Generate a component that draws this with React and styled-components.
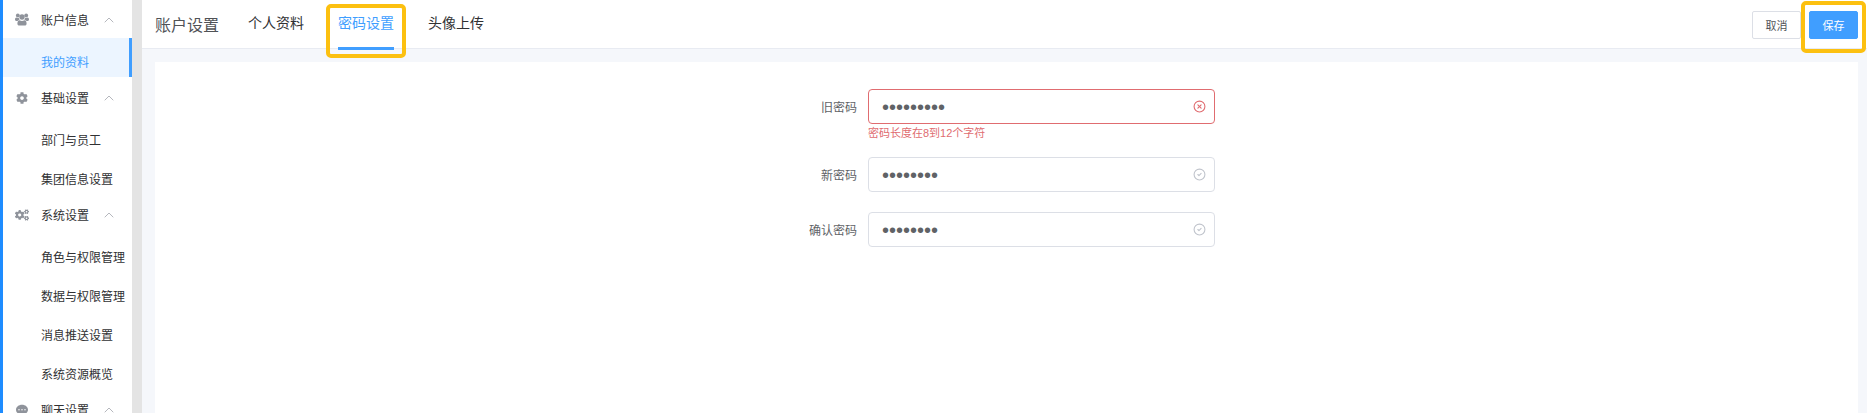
import { useState } from "react";
import styled, { createGlobalStyle } from "styled-components";
import { ChevronUp, CircleCheck, CircleX } from "lucide-react";
import { FaCog, FaCogs, FaCommentDots } from "react-icons/fa";

const GlobalStyle = createGlobalStyle`
  * {
    box-sizing: border-box;
  }

  body {
    margin: 0;
    overflow: hidden;
    color: #303133;
    font-family: "Liberation Sans", "Noto Sans CJK SC", sans-serif;
    font-size: 12px;
  }

  button,
  input {
    font-family: inherit;
  }
`;

const Layout = styled.div`
  display: flex;
  height: 100vh;
  overflow: hidden;
  background-color: #f5f7fb;
`;

const Sidebar = styled.nav`
  flex: none;
  width: 142px;
  overflow: hidden;
  background-color: #fff;
  border-left: 3px solid #1e8cff;
  border-right: 10px solid #e4e4e4;
`;

const GroupHeader = styled.button`
  display: grid;
  grid-template-columns: 16px 1fr 12px;
  column-gap: 11px;
  align-items: center;
  width: 100%;
  height: 38px;
  padding: 1px 17px 0 11px;
  border: none;
  background: none;
  color: #303133;
  font-size: 12px;
  text-align: left;
  cursor: pointer;

  svg {
    justify-self: center;
    color: #8f939b;
  }
`;

const GroupItems = styled.div`
  padding-bottom: 1px;
`;

const MenuLink = styled.a`
  display: flex;
  align-items: center;
  height: 39px;
  padding: 8px 0 0 38px;
  border-right: 3px solid ${(props) => (props.$active ? "#409eff" : "transparent")};
  background-color: ${(props) => (props.$active ? "#ecf5ff" : "transparent")};
  color: ${(props) => (props.$active ? "#409eff" : "#303133")};
  text-decoration: none;
  white-space: nowrap;
`;

const Main = styled.main`
  flex: 1;
  min-width: 0;
  display: flex;
  flex-direction: column;
`;

const Header = styled.header`
  display: flex;
  align-items: center;
  height: 49px;
  padding: 0 9px 0 13px;
  background-color: #fff;
  border-bottom: 1px solid #e8ebf2;
`;

const Title = styled.h1`
  margin: 0 29px 0 0;
  color: #505256;
  font-size: 16px;
  font-weight: 400;
`;

const Tabs = styled.div`
  display: flex;
  gap: 34px;
  flex: 1;
`;

const Highlight = styled.span`
  position: absolute;
  inset: ${(props) => props.$inset};
  border: 4px solid #fcc010;
  border-radius: 5px;
  pointer-events: none;
`;

const Tab = styled.button`
  position: relative;
  height: 50px;
  margin-bottom: -1px;
  padding: 0 0 2px;
  border: none;
  border-bottom: 3px solid ${(props) => (props.$active ? "#409eff" : "transparent")};
  background: none;
  color: ${(props) => (props.$active ? "#409eff" : "#303133")};
  font-size: 14px;
  white-space: nowrap;
  cursor: pointer;
`;

const Actions = styled.div`
  display: flex;
  gap: 8px;
  padding-top: 2px;
`;

const Button = styled.button`
  position: relative;
  width: 49px;
  height: 28px;
  padding: 0;
  border: 1px solid ${(props) => (props.$primary ? "#409eff" : "#dcdfe6")};
  border-radius: 2px;
  background-color: ${(props) => (props.$primary ? "#409eff" : "#fff")};
  color: ${(props) => (props.$primary ? "#fff" : "#505256")};
  font-size: 11px;
  cursor: pointer;
`;

const Card = styled.section`
  flex: 1;
  margin: 13px 9px 0 13px;
  padding: 27px 20px;
  background-color: #fff;
`;

const Form = styled.form`
  display: flex;
  flex-direction: column;
  gap: 20px;
  width: 100%;
  max-width: 417px;
  margin: 0 auto;
`;

const Field = styled.div`
  display: grid;
  grid-template-columns: 59px 1fr;
  column-gap: 11px;
  align-items: center;
`;

const Label = styled.label`
  color: #606266;
  text-align: right;
`;

const InputBox = styled.div`
  display: flex;
  align-items: center;
  height: 35px;
  padding: 0 8px 0 13px;
  border: 1px solid ${(props) => (props.$error ? "#e06c70" : "#dcdfe6")};
  border-radius: 4px;
  color: ${(props) => (props.$error ? "#e06c70" : "#c0c4cc")};
`;

const Input = styled.input`
  flex: 1;
  min-width: 0;
  height: 100%;
  padding: 2px 0 0;
  border: none;
  outline: none;
  background: none;
  color: #606266;
  font-size: 20px;
`;

const ErrorText = styled.p`
  grid-column: 2;
  margin: 5px 0 -1px;
  color: #e06c70;
  font-size: 11px;
  line-height: 9px;
`;

const GroupIcon = () => (
  <svg width="14" height="13" viewBox="0 0 14 13" fill="currentColor">
    <circle cx="2.8" cy="2.4" r="1.9" />
    <circle cx="11.2" cy="2.4" r="1.9" />
    <circle cx="7" cy="4" r="2.7" />
    <path d="M0 6.6C0 5.2.6 4.5 1.5 4.5c.7.4 1.6.4 2.3.2.1 1 .4 1.6.9 2.2-.9 0-1.6.4-2.2 1H1.2C.5 7.900 0 7.500 0 6.600z" />
    <path d="M14 6.600c0-1.400-.6-2.100-1.500-2.100-.7.4-1.600.4-2.300.2-.1 1-.4 1.600-.9 2.200.9 0 1.600.4 2.200 1h1.300c.7 0 1.200-.4 1.200-1.300z" />
    <path d="M2.400 10.800c0-2 .7-3.500 2.300-3.500.6.5 1.400.8 2.300.8s1.700-.3 2.300-.8c1.600 0 2.300 1.500 2.300 3.500 0 1.200-.8 1.800-1.800 1.800H4.200c-1 0-1.800-.6-1.800-1.800z" />
  </svg>
);

const menu = [
  { title: "账户信息", icon: <GroupIcon />, items: ["我的资料"] },
  { title: "基础设置", icon: <FaCog size={12} />, items: ["部门与员工", "集团信息设置"] },
  {
    title: "系统设置",
    icon: <FaCogs size={14} />,
    items: ["角色与权限管理", "数据与权限管理", "消息推送设置", "系统资源概览"],
  },
  { title: "聊天设置", icon: <FaCommentDots size={12} />, items: [] },
];

const tabs = ["个人资料", "密码设置", "头像上传"];

const fields = [
  { name: "oldPassword", label: "旧密码", error: "密码长度在8到12个字符" },
  { name: "newPassword", label: "新密码" },
  { name: "confirmPassword", label: "确认密码" },
];

const App = () => {
  const [activeTab, setActiveTab] = useState("密码设置");
  const [values, setValues] = useState({
    oldPassword: "abcdefghi",
    newPassword: "abcdefgh",
    confirmPassword: "abcdefgh",
  });

  const handleChange = (e) => {
    setValues({ ...values, [e.target.name]: e.target.value });
  };

  return (
    <>
      <GlobalStyle />
      <Layout>
        <Sidebar>
          {menu.map((group) => (
            <div key={group.title}>
              <GroupHeader type="button">
                {group.icon}
                {group.title}
                <ChevronUp size={16} strokeWidth={1} />
              </GroupHeader>
              <GroupItems>
                {group.items.map((item) => (
                  <MenuLink key={item} href="#" $active={item === "我的资料"}>
                    {item}
                  </MenuLink>
                ))}
              </GroupItems>
            </div>
          ))}
        </Sidebar>
        <Main>
          <Header>
            <Title>账户设置</Title>
            <Tabs>
              {tabs.map((tab) => (
                <Tab
                  key={tab}
                  type="button"
                  $active={tab === activeTab}
                  onClick={() => setActiveTab(tab)}
                >
                  {tab}
                  {tab === activeTab && <Highlight $inset="4px -12px -11px" />}
                </Tab>
              ))}
            </Tabs>
            <Actions>
              <Button type="button">取消</Button>
              <Button type="submit" form="password-form" $primary>
                保存
                <Highlight $inset="-11px -9px -15px" />
              </Button>
            </Actions>
          </Header>
          <Card>
            <Form id="password-form" onSubmit={(e) => e.preventDefault()}>
              {fields.map(({ name, label, error }) => (
                <Field key={name}>
                  <Label htmlFor={name}>{label}</Label>
                  <InputBox $error={Boolean(error)}>
                    <Input
                      id={name}
                      name={name}
                      type="password"
                      value={values[name]}
                      onChange={handleChange}
                    />
                    {error ? (
                      <CircleX size={13} strokeWidth={2} />
                    ) : (
                      <CircleCheck size={13} strokeWidth={2} />
                    )}
                  </InputBox>
                  {error && <ErrorText>{error}</ErrorText>}
                </Field>
              ))}
            </Form>
          </Card>
        </Main>
      </Layout>
    </>
  );
};

export default App;
